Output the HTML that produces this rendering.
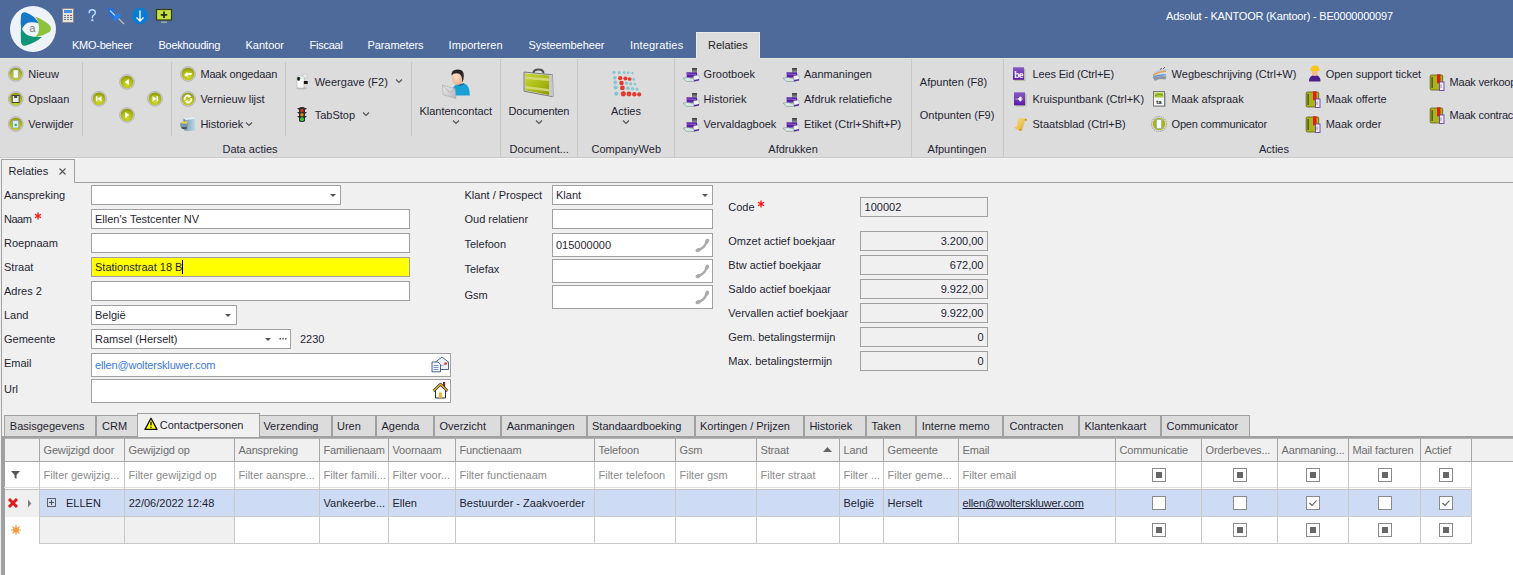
<!DOCTYPE html>
<html><head><meta charset="utf-8"><style>
html,body{margin:0;padding:0;width:1513px;height:575px;overflow:hidden;background:#f0f0f0}
.t{position:absolute;font:11px/13px "Liberation Sans",sans-serif;white-space:nowrap;color:#222}
.r{position:absolute;display:block}
</style></head><body>
<div class="r" style="left:0px;top:0px;width:1513px;height:58px;background:#4d6a9a;"></div>
<svg class="r" style="left:0px;top:0px" width="70" height="57" viewBox="0 0 70 57">
<circle cx="33" cy="29" r="23" fill="#eef2f9"/>
<path d="M21.5,30.5 Q20,22 21,15.5 Q22,11.5 26,12.5 Q34,15 39,23.5 Q33.5,21.5 28.5,22.5 Q24,24 21.5,30.5 Z" fill="#1679c8"/>
<path d="M35,16.5 Q44,20 49.5,25 Q52.5,28.5 49.5,32 Q43,36 35,37.5 Q39.5,33 39,27 Q38.5,20.5 35,16.5 Z" fill="#8dc33c"/>
<path d="M21,26.5 Q23.5,33.5 28.5,35.5 Q34,37.5 42,37 Q35,43 26,45.5 Q21.5,46.5 21,42 Q20.5,34 21,26.5 Z" fill="#109579"/>
<text x="32.3" y="32.3" font-family="Liberation Sans" font-size="10.5" fill="#777" text-anchor="middle">a</text>
</svg>
<svg class="r" style="left:61px;top:7px" width="14" height="17" viewBox="0 0 14 17">
<rect x="1.5" y="1.5" width="11" height="14" fill="#e4e4e4" stroke="#8a8a8a"/>
<rect x="3" y="3" width="8" height="3" fill="#4f8fe0"/>
<g fill="#777"><rect x="3" y="8" width="2" height="1"/><rect x="6" y="8" width="2" height="1"/>
<rect x="3" y="10" width="2" height="1"/><rect x="6" y="10" width="2" height="1"/><rect x="9" y="10" width="2" height="1"/>
<rect x="3" y="12" width="2" height="1"/><rect x="6" y="12" width="2" height="1"/><rect x="9" y="12" width="2" height="1"/></g>
<rect x="9" y="8" width="2" height="1" fill="#e03030"/>
</svg>
<svg class="r" style="left:86px;top:8px" width="12" height="15" viewBox="0 0 12 15"><path d="M3.2,4.8 Q3.2,1.8 6.2,1.8 Q9.3,1.8 9.3,4.6 Q9.3,6.4 7.4,7.3 Q6.3,7.9 6.3,9.8" stroke="#3a6ab8" stroke-width="2.6" fill="none" stroke-linecap="round"/><path d="M3.2,4.8 Q3.2,1.8 6.2,1.8 Q9.3,1.8 9.3,4.6 Q9.3,6.4 7.4,7.3 Q6.3,7.9 6.3,9.8" stroke="#c6def8" stroke-width="1.4" fill="none" stroke-linecap="round"/><circle cx="6.3" cy="12.2" r="1.4" fill="#c6def8" stroke="#3a6ab8" stroke-width="0.6"/></svg>
<svg class="r" style="left:107px;top:7px" width="18" height="18" viewBox="0 0 18 18">
<line x1="11" y1="11" x2="17" y2="17" stroke="#c0c0c0" stroke-width="1.2"/>
<path d="M3.5,6 L8.5,11" stroke="#1f6fd8" stroke-width="4.2"/>
<ellipse cx="4" cy="4" rx="3.6" ry="2.8" transform="rotate(45 4 4)" fill="#1f6fdc"/>
<ellipse cx="10" cy="10" rx="4.6" ry="2.4" transform="rotate(-45 10 10)" fill="#2a7ee8"/>
<path d="M3,3.5 L8,8.5" stroke="#a8d8ff" stroke-width="1.3"/>
</svg>
<svg class="r" style="left:131px;top:7px" width="18" height="18" viewBox="0 0 18 18">
<circle cx="9" cy="9" r="8.2" fill="#0a7bd2"/>
<path d="M9,3.5 V14 M5.5,10.5 L9,14 L12.5,10.5" stroke="#fff" stroke-width="1.3" fill="none"/>
</svg>
<svg class="r" style="left:155px;top:8px" width="18" height="16" viewBox="0 0 18 16">
<rect x="1.5" y="1.5" width="15" height="10.5" fill="#c4e43c" stroke="#3a3a1a" stroke-width="1.2"/>
<path d="M9,3.5 V10 M5.8,6.8 H12.2" stroke="#2a2a10" stroke-width="1.8"/>
<rect x="6" y="13.5" width="6" height="1.5" fill="#9aa"/>
</svg>
<div class="t" style="left:1166px;top:10.00px;color:#fff;letter-spacing:-0.2px;">Adsolut - KANTOOR (Kantoor) - BE0000000097</div>
<div class="t" style="left:72px;top:39.20px;color:#fff;letter-spacing:-0.25px;">KMO-beheer</div>
<div class="t" style="left:158.5px;top:39.20px;color:#fff;letter-spacing:-0.24px;">Boekhouding</div>
<div class="t" style="left:245.5px;top:39.20px;color:#fff;letter-spacing:0px;">Kantoor</div>
<div class="t" style="left:309.5px;top:39.20px;color:#fff;letter-spacing:-0.25px;">Fiscaal</div>
<div class="t" style="left:367.5px;top:39.20px;color:#fff;letter-spacing:-0.09px;">Parameters</div>
<div class="t" style="left:448.5px;top:39.20px;color:#fff;letter-spacing:0.1px;">Importeren</div>
<div class="t" style="left:528.5px;top:39.20px;color:#fff;letter-spacing:-0.1px;">Systeembeheer</div>
<div class="t" style="left:630px;top:39.20px;color:#fff;letter-spacing:0.18px;">Integraties</div>
<div class="r" style="left:696px;top:32px;width:64px;height:27px;background:#dcdcdc;border:1px solid #ebebe8;box-sizing:border-box;border-bottom:none;"></div>
<div class="t" style="left:708px;top:39.20px;color:#222;">Relaties</div>
<div class="r" style="left:0px;top:58px;width:1513px;height:99px;background:#dcdcdc;"></div>
<div class="r" style="left:0px;top:58px;width:696px;height:1px;background:#e6e6e2;"></div>
<div class="r" style="left:760px;top:58px;width:753px;height:1px;background:#e6e6e2;"></div>
<svg class="r" style="left:6px;top:65px" width="18" height="18" viewBox="0 0 18 18">
<defs><radialGradient id="og6_65" cx="0.5" cy="0.72" r="0.8"><stop offset="0" stop-color="#d4dc30"/><stop offset="0.6" stop-color="#aab414"/><stop offset="1" stop-color="#7a8600"/></radialGradient></defs>
<circle cx="9.7" cy="9" r="7.4" fill="#d0d0d0" stroke="#a8a8a8" stroke-width="0.7"/>
<circle cx="9.7" cy="9" r="6.3" fill="url(#og6_65)"/>
<g transform="translate(9.7,9)"><rect x="-2.5" y="-4" width="5" height="8" fill="#f4f8ff" stroke="#9ab" stroke-width="0.6"/></g></svg>
<div class="t" style="left:28.3px;top:68.40px;color:#1f1f33;">Nieuw</div>
<svg class="r" style="left:6px;top:90px" width="18" height="18" viewBox="0 0 18 18">
<defs><radialGradient id="og6_90" cx="0.5" cy="0.72" r="0.8"><stop offset="0" stop-color="#d4dc30"/><stop offset="0.6" stop-color="#aab414"/><stop offset="1" stop-color="#7a8600"/></radialGradient></defs>
<circle cx="9.7" cy="9" r="7.4" fill="#d0d0d0" stroke="#a8a8a8" stroke-width="0.7"/>
<circle cx="9.7" cy="9" r="6.3" fill="url(#og6_90)"/>
<g transform="translate(9.7,9)"><rect x="-3.5" y="-3.5" width="7" height="7" fill="#eee" stroke="#444" stroke-width="1"/><rect x="-1.5" y="-3.5" width="3" height="2.5" fill="#444"/></g></svg>
<div class="t" style="left:28.3px;top:93.40px;color:#1f1f33;">Opslaan</div>
<svg class="r" style="left:6px;top:115px" width="18" height="18" viewBox="0 0 18 18">
<defs><radialGradient id="og6_115" cx="0.5" cy="0.72" r="0.8"><stop offset="0" stop-color="#d4dc30"/><stop offset="0.6" stop-color="#aab414"/><stop offset="1" stop-color="#7a8600"/></radialGradient></defs>
<circle cx="9.7" cy="9" r="7.4" fill="#d0d0d0" stroke="#a8a8a8" stroke-width="0.7"/>
<circle cx="9.7" cy="9" r="6.3" fill="url(#og6_115)"/>
<g transform="translate(9.7,9)"><rect x="-3" y="-3.5" width="6" height="7.5" fill="#cfe8ff" stroke="#89a" stroke-width="0.6"/><path d="M-1,0 h2 v2 h-2z" fill="#3a3"/></g></svg>
<div class="t" style="left:28.3px;top:118.40px;color:#1f1f33;">Verwijder</div>
<div class="r" style="left:82px;top:62px;width:1px;height:74px;background:#c4c4c4;"></div>
<svg class="r" style="left:90px;top:89px" width="18" height="18" viewBox="0 0 18 18">
<defs><radialGradient id="og90_89" cx="0.5" cy="0.72" r="0.8"><stop offset="0" stop-color="#d4dc30"/><stop offset="0.6" stop-color="#aab414"/><stop offset="1" stop-color="#7a8600"/></radialGradient></defs>
<circle cx="9" cy="9.700000000000003" r="7.4" fill="#d0d0d0" stroke="#a8a8a8" stroke-width="0.7"/>
<circle cx="9" cy="9.700000000000003" r="6.3" fill="url(#og90_89)"/>
<g transform="translate(9,9.700000000000003)"><path d="M-2.3,-2.5 V2.5" stroke="#fff" stroke-width="1.6"/><path d="M2.5,-2.8 L-1.5,0 L2.5,2.8 Z" fill="#fff"/></g></svg>
<svg class="r" style="left:118px;top:73px" width="18" height="18" viewBox="0 0 18 18">
<defs><radialGradient id="og118_73" cx="0.5" cy="0.72" r="0.8"><stop offset="0" stop-color="#d4dc30"/><stop offset="0.6" stop-color="#aab414"/><stop offset="1" stop-color="#7a8600"/></radialGradient></defs>
<circle cx="9" cy="9" r="7.4" fill="#d0d0d0" stroke="#a8a8a8" stroke-width="0.7"/>
<circle cx="9" cy="9" r="6.3" fill="url(#og118_73)"/>
<g transform="translate(9,9)"><path d="M1.8,-3 L-2.2,0 L1.8,3 Z" fill="#fff"/></g></svg>
<svg class="r" style="left:118px;top:106px" width="18" height="18" viewBox="0 0 18 18">
<defs><radialGradient id="og118_106" cx="0.5" cy="0.72" r="0.8"><stop offset="0" stop-color="#d4dc30"/><stop offset="0.6" stop-color="#aab414"/><stop offset="1" stop-color="#7a8600"/></radialGradient></defs>
<circle cx="9" cy="9" r="7.4" fill="#d0d0d0" stroke="#a8a8a8" stroke-width="0.7"/>
<circle cx="9" cy="9" r="6.3" fill="url(#og118_106)"/>
<g transform="translate(9,9)"><path d="M-1.8,-3 L2.2,0 L-1.8,3 Z" fill="#fff"/></g></svg>
<svg class="r" style="left:146px;top:89px" width="18" height="18" viewBox="0 0 18 18">
<defs><radialGradient id="og146_89" cx="0.5" cy="0.72" r="0.8"><stop offset="0" stop-color="#d4dc30"/><stop offset="0.6" stop-color="#aab414"/><stop offset="1" stop-color="#7a8600"/></radialGradient></defs>
<circle cx="9" cy="9.700000000000003" r="7.4" fill="#d0d0d0" stroke="#a8a8a8" stroke-width="0.7"/>
<circle cx="9" cy="9.700000000000003" r="6.3" fill="url(#og146_89)"/>
<g transform="translate(9,9.700000000000003)"><path d="M2.3,-2.5 V2.5" stroke="#fff" stroke-width="1.6"/><path d="M-2.5,-2.8 L1.5,0 L-2.5,2.8 Z" fill="#fff"/></g></svg>
<div class="r" style="left:171px;top:62px;width:1px;height:74px;background:#c4c4c4;"></div>
<svg class="r" style="left:179px;top:65px" width="18" height="18" viewBox="0 0 18 18">
<defs><radialGradient id="og179_65" cx="0.5" cy="0.72" r="0.8"><stop offset="0" stop-color="#d4dc30"/><stop offset="0.6" stop-color="#aab414"/><stop offset="1" stop-color="#7a8600"/></radialGradient></defs>
<circle cx="9" cy="9" r="7.4" fill="#d0d0d0" stroke="#a8a8a8" stroke-width="0.7"/>
<circle cx="9" cy="9" r="6.3" fill="url(#og179_65)"/>
<g transform="translate(9,9)"><path d="M-4,1.2 L-0.8,-2.2 L-0.6,-0.6 Q2.5,-2 4.2,-0.2 L3,1.2 Q1.2,0.2 -0.5,1.2 L-0.3,2.8 Z" fill="#fff"/></g></svg>
<div class="t" style="left:200.4px;top:68.40px;color:#1f1f33;letter-spacing:-0.17px;">Maak ongedaan</div>
<svg class="r" style="left:179px;top:90px" width="18" height="18" viewBox="0 0 18 18">
<defs><radialGradient id="og179_90" cx="0.5" cy="0.72" r="0.8"><stop offset="0" stop-color="#d4dc30"/><stop offset="0.6" stop-color="#aab414"/><stop offset="1" stop-color="#7a8600"/></radialGradient></defs>
<circle cx="9" cy="9" r="7.4" fill="#d0d0d0" stroke="#a8a8a8" stroke-width="0.7"/>
<circle cx="9" cy="9" r="6.3" fill="url(#og179_90)"/>
<g transform="translate(9,9)"><path d="M-3.2,1 A3.3,3.3 0 0 1 1.5,-3" stroke="#fff" stroke-width="1.9" fill="none"/><path d="M0.5,-4.8 L3.2,-2.6 L0.3,-1 Z" fill="#fff"/><path d="M3.2,-1 A3.3,3.3 0 0 1 -1.5,3" stroke="#fff" stroke-width="1.9" fill="none"/><path d="M-0.5,4.8 L-3.2,2.6 L-0.3,1 Z" fill="#fff"/></g></svg>
<div class="t" style="left:200.4px;top:93.40px;color:#1f1f33;">Vernieuw lijst</div>
<svg class="r" style="left:176px;top:112px" width="24" height="24" viewBox="0 0 24 24">
<defs><linearGradient id="cabg" x1="0" y1="0" x2="1" y2="0"><stop offset="0" stop-color="#7fa4b6"/><stop offset="1" stop-color="#b8d8e4"/></linearGradient></defs>
<path d="M7.5,6.5 L17,5.5 L19,7 L9.5,8 Z" fill="#e2f0f6"/>
<path d="M9.5,8 L19,7 L19,18.5 L9.5,19 Z" fill="url(#cabg)"/>
<path d="M7.5,6.5 L9.5,8 L9.5,19 L7.5,17.5 Z" fill="#6a8898"/>
<path d="M4,10 L11.5,10 L12,15 L4.5,15 Z" fill="#7a98a8"/>
<path d="M4,10 L11.5,10 L11.5,11 L4,11 Z" fill="#c8dce4"/>
<rect x="6" y="9.5" width="5" height="2" fill="#f0d040"/>
<path d="M5,15 L11,15 L11,17 L6,17 Z" fill="#4a5a64"/>
</svg>
<div class="t" style="left:200.4px;top:118.40px;color:#1f1f33;">Historiek</div>
<svg class="r" style="left:245px;top:121px" width="8" height="6" viewBox="0 0 8 6"><path d="M1,1.5 L4,4.5 L7,1.5" stroke="#555" stroke-width="1.2" fill="none"/></svg>
<div class="r" style="left:285px;top:62px;width:1px;height:74px;background:#c4c4c4;"></div>
<svg class="r" style="left:292px;top:70px" width="20" height="22" viewBox="0 0 20 22">
<ellipse cx="9.5" cy="18.3" rx="5.5" ry="1.2" fill="#bcbcbc"/>
<rect x="11" y="3.8" width="4.2" height="4.5" rx="1.2" fill="#eaeaea" stroke="#b8b8b8" stroke-width="0.5"/>
<rect x="5" y="6" width="7" height="12" rx="1.2" fill="#fafafa" stroke="#b4b4b4" stroke-width="0.6"/>
<ellipse cx="6.6" cy="8.8" rx="1.5" ry="2" fill="#141414"/>
<path d="M7.6,7.5 Q8.3,8.8 7.6,10.2" stroke="#2a9a2a" stroke-width="0.6" fill="none"/>
<rect x="11.5" y="10.6" width="4.6" height="3.7" fill="#111" stroke="#f4f4f4" stroke-width="0.7"/>
</svg>
<div class="t" style="left:314.7px;top:76.10px;color:#1f1f33;">Weergave (F2)</div>
<svg class="r" style="left:395px;top:78px" width="8" height="6" viewBox="0 0 8 6"><path d="M1,1.5 L4,4.5 L7,1.5" stroke="#555" stroke-width="1.2" fill="none"/></svg>
<svg class="r" style="left:295px;top:105px" width="14" height="19" viewBox="0 0 14 19">
<path d="M2,3 L12,3 L10,5 L10,7 L12,7 L10,9 L10,11 L12,11 L10,13 L10,16 L4,16 L4,13 L2,11 L4,11 L4,9 L2,7 L4,7 L4,5 Z" fill="#333"/>
<rect x="4" y="2" width="6" height="15" rx="2" fill="#2e2e2e"/>
<circle cx="7" cy="5.5" r="1.7" fill="#d8301c"/><circle cx="7" cy="9.8" r="1.7" fill="#e08a10"/><circle cx="7" cy="14.3" r="2" fill="#30d030"/>
</svg>
<div class="t" style="left:314.7px;top:109.10px;color:#1f1f33;">TabStop</div>
<svg class="r" style="left:362px;top:111px" width="8" height="6" viewBox="0 0 8 6"><path d="M1,1.5 L4,4.5 L7,1.5" stroke="#555" stroke-width="1.2" fill="none"/></svg>
<div class="r" style="left:411px;top:62px;width:1px;height:74px;background:#c4c4c4;"></div>
<svg class="r" style="left:435px;top:62px" width="40" height="40" viewBox="0 0 40 40">
<defs><linearGradient id="envg" x1="0" y1="0" x2="1" y2="1"><stop offset="0" stop-color="#f0f0f0"/><stop offset="1" stop-color="#b0b4b8"/></linearGradient>
<radialGradient id="faceg" cx="0.4" cy="0.4" r="0.7"><stop offset="0" stop-color="#fde0cc"/><stop offset="1" stop-color="#e8a880"/></radialGradient></defs>
<path d="M16,33.5 Q16,24.5 23,21.5 L29.5,21.5 Q34.8,23.5 34.8,33.5 Z" fill="#1ba0d6"/>
<path d="M21,21.5 Q25,25 29,21.5" stroke="#1a5070" stroke-width="1" fill="none"/>
<ellipse cx="22.4" cy="15.8" rx="5.6" ry="7.3" fill="url(#faceg)"/>
<path d="M16.5,13.5 Q16,7.5 22.5,7.5 Q28.8,7 28.8,13.5 Q28.8,18 27.2,20.5 Q27.5,12.5 23.5,11.5 Q18.5,10.8 16.5,13.5 Z" fill="#262626"/>
<path d="M7.5,23 L20,26.8 L21,36.5 L8.2,32.8 Z" fill="url(#envg)" stroke="#a8a8a8" stroke-width="0.6"/>
<path d="M7.8,23.5 L15,30.5 L20.2,27.2" stroke="#9a9a9a" stroke-width="0.6" fill="none"/>
</svg>
<div class="t" style="left:419.4px;top:105.10px;color:#1f1f33;">Klantencontact</div>
<svg class="r" style="left:452px;top:119px" width="8" height="6" viewBox="0 0 8 6"><path d="M1,1.5 L4,4.5 L7,1.5" stroke="#555" stroke-width="1.2" fill="none"/></svg>
<div class="t" style="left:222.5px;top:143.10px;color:#1f1f33;">Data acties</div>
<div class="r" style="left:500px;top:59px;width:1px;height:98px;background:#c8c8c8;"></div>
<svg class="r" style="left:518px;top:62px" width="40" height="40" viewBox="0 0 40 40">
<defs><linearGradient id="bcg" x1="0" y1="0" x2="1" y2="1"><stop offset="0" stop-color="#c8d630"/><stop offset="0.6" stop-color="#a8b812"/><stop offset="1" stop-color="#8a9808"/></linearGradient></defs>
<path d="M15.5,11 Q15.5,7.5 20.5,7.5 Q25.5,7.5 25.5,11.5" stroke="#505050" stroke-width="2" fill="none"/>
<path d="M6,10 L34.5,12.8 L35,34.7 L6,29.2 Z" fill="#d8d8d8" stroke="#606060" stroke-width="0.8"/>
<path d="M7.2,11.5 L31,13.5 L31,33 L7.2,28.2 Z" fill="url(#bcg)"/>
<path d="M31,13.5 L34.5,12.8 L35,34.7 L31,33 Z" fill="#c8c8c8"/>
<path d="M7.2,14.5 L31,16.5 L31,19 L7.2,17 Z" fill="#d8e088" opacity="0.8"/>
<path d="M7.2,24 L31,27 L31,29.5 L7.2,26.5 Z" fill="#d8e088" opacity="0.8"/>
</svg>
<div class="t" style="left:508.6px;top:105.10px;color:#1f1f33;letter-spacing:-0.17px;">Documenten</div>
<svg class="r" style="left:535px;top:119px" width="8" height="6" viewBox="0 0 8 6"><path d="M1,1.5 L4,4.5 L7,1.5" stroke="#555" stroke-width="1.2" fill="none"/></svg>
<div class="t" style="left:509.6px;top:143.10px;color:#1f1f33;">Document...</div>
<div class="r" style="left:577px;top:59px;width:1px;height:98px;background:#c8c8c8;"></div>
<svg class="r" style="left:605px;top:65px" width="40" height="35" viewBox="0 0 40 35"><circle cx="9.0" cy="7.3" r="1.60" fill="#86c6d2"/><circle cx="14.3" cy="7.5" r="1.50" fill="#86c6d2"/><circle cx="19.2" cy="7.7" r="1.41" fill="#86c6d2"/><circle cx="23.2" cy="7.9" r="1.31" fill="#86c6d2"/><circle cx="27.4" cy="8.1" r="1.22" fill="#86c6d2"/><circle cx="9.8" cy="12.8" r="1.75" fill="#86c6d2"/><circle cx="15.2" cy="13.2" r="2.11" fill="#e8392c"/><circle cx="20.4" cy="13.6" r="1.98" fill="#e8392c"/><circle cx="24.7" cy="14.0" r="1.85" fill="#e8392c"/><circle cx="28.7" cy="14.4" r="1.33" fill="#86c6d2"/><circle cx="10.2" cy="17.5" r="1.90" fill="#86c6d2"/><circle cx="16.5" cy="17.9" r="2.26" fill="#e8392c"/><circle cx="21.5" cy="18.3" r="1.67" fill="#86c6d2"/><circle cx="25.8" cy="18.7" r="1.56" fill="#86c6d2"/><circle cx="30.0" cy="19.1" r="1.44" fill="#86c6d2"/><circle cx="10.6" cy="22.5" r="2.05" fill="#86c6d2"/><circle cx="17.4" cy="22.9" r="2.40" fill="#e8392c"/><circle cx="23.0" cy="23.3" r="1.80" fill="#86c6d2"/><circle cx="27.5" cy="23.7" r="1.68" fill="#86c6d2"/><circle cx="32.0" cy="24.1" r="1.56" fill="#86c6d2"/><circle cx="11.3" cy="28.6" r="2.20" fill="#86c6d2"/><circle cx="18.3" cy="28.8" r="2.54" fill="#e8392c"/><circle cx="24.0" cy="29.0" r="2.38" fill="#e8392c"/><circle cx="29.3" cy="29.2" r="2.21" fill="#e8392c"/><circle cx="34.2" cy="29.4" r="2.05" fill="#e8392c"/></svg>
<div class="t" style="left:611px;top:105.10px;color:#1f1f33;">Acties</div>
<svg class="r" style="left:622px;top:119px" width="8" height="6" viewBox="0 0 8 6"><path d="M1,1.5 L4,4.5 L7,1.5" stroke="#555" stroke-width="1.2" fill="none"/></svg>
<div class="t" style="left:591.5px;top:143.10px;color:#1f1f33;">CompanyWeb</div>
<div class="r" style="left:674px;top:59px;width:1px;height:98px;background:#c8c8c8;"></div>
<svg class="r" style="left:680px;top:64px" width="20" height="20" viewBox="0 0 20 20">
<defs><linearGradient id="ppg" x1="0" y1="0" x2="0" y2="1"><stop offset="0" stop-color="#3a3a3a"/><stop offset="1" stop-color="#b8b8b8"/></linearGradient></defs>
<rect x="12" y="4" width="5" height="6" fill="url(#ppg)"/>
<path d="M6.5,8.2 L17,8.6 L17.5,13.6 L6.8,13.8 Z" fill="#5a1fa6"/>
<path d="M7,10 L16,10.5" stroke="#9a78d0" stroke-width="0.8"/>
<path d="M13.5,12 L19,11 L19,16.5 L14,17.5 Z" fill="#eef2f2" stroke="#8a9a9a" stroke-width="0.4"/>
<path d="M14,16 L19,15 L19,16.6 L14,17.5 Z" fill="#5a1fa6"/>
<path d="M3,14.2 L8,13.4 L14,15 L14,17.3 L6.5,17.4 Z" fill="#d6eaea" stroke="#6a7a7a" stroke-width="0.5"/>
</svg>
<div class="t" style="left:703.6px;top:68.40px;color:#1f1f33;">Grootboek</div>
<svg class="r" style="left:780px;top:64px" width="20" height="20" viewBox="0 0 20 20">
<defs><linearGradient id="ppg" x1="0" y1="0" x2="0" y2="1"><stop offset="0" stop-color="#3a3a3a"/><stop offset="1" stop-color="#b8b8b8"/></linearGradient></defs>
<rect x="12" y="4" width="5" height="6" fill="url(#ppg)"/>
<path d="M6.5,8.2 L17,8.6 L17.5,13.6 L6.8,13.8 Z" fill="#5a1fa6"/>
<path d="M7,10 L16,10.5" stroke="#9a78d0" stroke-width="0.8"/>
<path d="M13.5,12 L19,11 L19,16.5 L14,17.5 Z" fill="#eef2f2" stroke="#8a9a9a" stroke-width="0.4"/>
<path d="M14,16 L19,15 L19,16.6 L14,17.5 Z" fill="#5a1fa6"/>
<path d="M3,14.2 L8,13.4 L14,15 L14,17.3 L6.5,17.4 Z" fill="#d6eaea" stroke="#6a7a7a" stroke-width="0.5"/>
</svg>
<div class="t" style="left:804px;top:68.40px;color:#1f1f33;">Aanmaningen</div>
<svg class="r" style="left:680px;top:89px" width="20" height="20" viewBox="0 0 20 20">
<defs><linearGradient id="ppg" x1="0" y1="0" x2="0" y2="1"><stop offset="0" stop-color="#3a3a3a"/><stop offset="1" stop-color="#b8b8b8"/></linearGradient></defs>
<rect x="12" y="4" width="5" height="6" fill="url(#ppg)"/>
<path d="M6.5,8.2 L17,8.6 L17.5,13.6 L6.8,13.8 Z" fill="#5a1fa6"/>
<path d="M7,10 L16,10.5" stroke="#9a78d0" stroke-width="0.8"/>
<path d="M13.5,12 L19,11 L19,16.5 L14,17.5 Z" fill="#eef2f2" stroke="#8a9a9a" stroke-width="0.4"/>
<path d="M14,16 L19,15 L19,16.6 L14,17.5 Z" fill="#5a1fa6"/>
<path d="M3,14.2 L8,13.4 L14,15 L14,17.3 L6.5,17.4 Z" fill="#d6eaea" stroke="#6a7a7a" stroke-width="0.5"/>
</svg>
<div class="t" style="left:703.6px;top:93.40px;color:#1f1f33;">Historiek</div>
<svg class="r" style="left:780px;top:89px" width="20" height="20" viewBox="0 0 20 20">
<defs><linearGradient id="ppg" x1="0" y1="0" x2="0" y2="1"><stop offset="0" stop-color="#3a3a3a"/><stop offset="1" stop-color="#b8b8b8"/></linearGradient></defs>
<rect x="12" y="4" width="5" height="6" fill="url(#ppg)"/>
<path d="M6.5,8.2 L17,8.6 L17.5,13.6 L6.8,13.8 Z" fill="#5a1fa6"/>
<path d="M7,10 L16,10.5" stroke="#9a78d0" stroke-width="0.8"/>
<path d="M13.5,12 L19,11 L19,16.5 L14,17.5 Z" fill="#eef2f2" stroke="#8a9a9a" stroke-width="0.4"/>
<path d="M14,16 L19,15 L19,16.6 L14,17.5 Z" fill="#5a1fa6"/>
<path d="M3,14.2 L8,13.4 L14,15 L14,17.3 L6.5,17.4 Z" fill="#d6eaea" stroke="#6a7a7a" stroke-width="0.5"/>
</svg>
<div class="t" style="left:804px;top:93.40px;color:#1f1f33;">Afdruk relatiefiche</div>
<svg class="r" style="left:680px;top:114px" width="20" height="20" viewBox="0 0 20 20">
<defs><linearGradient id="ppg" x1="0" y1="0" x2="0" y2="1"><stop offset="0" stop-color="#3a3a3a"/><stop offset="1" stop-color="#b8b8b8"/></linearGradient></defs>
<rect x="12" y="4" width="5" height="6" fill="url(#ppg)"/>
<path d="M6.5,8.2 L17,8.6 L17.5,13.6 L6.8,13.8 Z" fill="#5a1fa6"/>
<path d="M7,10 L16,10.5" stroke="#9a78d0" stroke-width="0.8"/>
<path d="M13.5,12 L19,11 L19,16.5 L14,17.5 Z" fill="#eef2f2" stroke="#8a9a9a" stroke-width="0.4"/>
<path d="M14,16 L19,15 L19,16.6 L14,17.5 Z" fill="#5a1fa6"/>
<path d="M3,14.2 L8,13.4 L14,15 L14,17.3 L6.5,17.4 Z" fill="#d6eaea" stroke="#6a7a7a" stroke-width="0.5"/>
</svg>
<div class="t" style="left:703.6px;top:118.40px;color:#1f1f33;">Vervaldagboek</div>
<svg class="r" style="left:780px;top:114px" width="20" height="20" viewBox="0 0 20 20">
<defs><linearGradient id="ppg" x1="0" y1="0" x2="0" y2="1"><stop offset="0" stop-color="#3a3a3a"/><stop offset="1" stop-color="#b8b8b8"/></linearGradient></defs>
<rect x="12" y="4" width="5" height="6" fill="url(#ppg)"/>
<path d="M6.5,8.2 L17,8.6 L17.5,13.6 L6.8,13.8 Z" fill="#5a1fa6"/>
<path d="M7,10 L16,10.5" stroke="#9a78d0" stroke-width="0.8"/>
<path d="M13.5,12 L19,11 L19,16.5 L14,17.5 Z" fill="#eef2f2" stroke="#8a9a9a" stroke-width="0.4"/>
<path d="M14,16 L19,15 L19,16.6 L14,17.5 Z" fill="#5a1fa6"/>
<path d="M3,14.2 L8,13.4 L14,15 L14,17.3 L6.5,17.4 Z" fill="#d6eaea" stroke="#6a7a7a" stroke-width="0.5"/>
</svg>
<div class="t" style="left:804px;top:118.40px;color:#1f1f33;">Etiket (Ctrl+Shift+P)</div>
<div class="t" style="left:768.3px;top:143.10px;color:#1f1f33;">Afdrukken</div>
<div class="r" style="left:911px;top:59px;width:1px;height:98px;background:#c8c8c8;"></div>
<div class="t" style="left:919.8px;top:76.10px;color:#1f1f33;">Afpunten (F8)</div>
<div class="t" style="left:919.8px;top:109.10px;color:#1f1f33;">Ontpunten (F9)</div>
<div class="t" style="left:927.6px;top:143.10px;color:#1f1f33;">Afpuntingen</div>
<div class="r" style="left:1003px;top:59px;width:1px;height:98px;background:#c8c8c8;"></div>
<svg class="r" style="left:1012px;top:66px" width="15" height="16" viewBox="0 0 15 16">
<defs><linearGradient id="eidg" x1="0" y1="0" x2="0" y2="1"><stop offset="0" stop-color="#8a5ac8"/><stop offset="1" stop-color="#5a1aa8"/></linearGradient></defs>
<path d="M1.5,1.5 L11.8,2 L13.5,3.5 L13.5,15 L3,15 L1.5,13.5 Z" fill="#b8bca8"/>
<rect x="1" y="1.3" width="11" height="12.5" fill="url(#eidg)"/>
<text x="6.6" y="11.6" font-family="Liberation Sans" font-size="8.5" font-weight="bold" fill="#fff" text-anchor="middle" letter-spacing="-0.6">be</text>
</svg>
<div class="t" style="left:1032.5px;top:68.40px;color:#1f1f33;letter-spacing:-0.15px;">Lees Eid (Ctrl+E)</div>
<svg class="r" style="left:1013px;top:91px" width="15" height="16" viewBox="0 0 15 16">
<path d="M1.5,1.5 L11.8,2 L13.5,3.5 L13.5,15.5 L3,15.5 L1.5,14 Z" fill="#b8bca8"/>
<rect x="1" y="1.3" width="11" height="13" fill="url(#eidg)"/>
<path d="M2.5,8 H10" stroke="#d8c8f0" stroke-width="0.8"/>
<path d="M5,8 L7,5.5 L8.5,6 L8.5,10 L7,10.5 Z" fill="#fff"/>
</svg>
<div class="t" style="left:1032.5px;top:93.40px;color:#1f1f33;">Kruispuntbank (Ctrl+K)</div>
<svg class="r" style="left:1008px;top:112px" width="24" height="24" viewBox="0 0 24 24">
<defs><linearGradient id="scg" x1="0" y1="0" x2="1" y2="1"><stop offset="0" stop-color="#f8e08a"/><stop offset="1" stop-color="#e0a830"/></linearGradient></defs>
<path d="M10.5,6.2 Q14.5,5.5 18.8,7.2 Q18.5,9 16.8,9 Q15.8,13 14.5,17.5 Q14,19 12.5,18.8 Q9,18 6,15.5 Q6.5,14.5 8.5,14.8 Q9.5,10 10.5,6.2 Z" fill="url(#scg)"/>
<circle cx="17.8" cy="7.8" r="1.1" fill="#c89020"/><circle cx="12.3" cy="17.8" r="1" fill="#c89020"/>
</svg>
<div class="t" style="left:1032.5px;top:118.40px;color:#1f1f33;">Staatsblad (Ctrl+B)</div>
<svg class="r" style="left:1148px;top:62px" width="24" height="24" viewBox="0 0 24 24">
<path d="M4.5,12.5 Q9,6.5 18.5,7 L18,10 Q11,10 6,14.5 Z" fill="#c0c8d0"/>
<path d="M5,13.5 Q10,9.5 18,9.5" stroke="#f09a30" stroke-width="1.2" fill="none"/>
<path d="M5,15.5 Q10,12.5 18,13" stroke="#4a8ad8" stroke-width="1.2" fill="none"/>
<path d="M5,16 Q11,13 18.5,14.5 L17.5,17.5 Q11,16 7,19 Z" fill="#8c969e"/>
<path d="M15,7 L17,5 M12,7.5 L14,6" stroke="#444" stroke-width="0.8"/>
</svg>
<div class="t" style="left:1171.6px;top:68.40px;color:#1f1f33;">Wegbeschrijving (Ctrl+W)</div>
<svg class="r" style="left:1150px;top:88px" width="18" height="20" viewBox="0 0 18 20">
<rect x="5" y="5" width="11" height="14" fill="#b8b8b8"/>
<rect x="3.5" y="3.5" width="11" height="14.5" fill="#f6f6f6" stroke="#707070" stroke-width="0.9"/>
<rect x="4.5" y="4.5" width="9" height="5" fill="#a8c838"/>
<path d="M5,8 Q8,5 13,7" stroke="#6a8a20" stroke-width="0.8" fill="none"/>
<text x="9" y="15.5" font-family="Liberation Sans" font-size="6" font-weight="bold" fill="#222" text-anchor="middle">ta</text>
</svg>
<div class="t" style="left:1171.6px;top:93.40px;color:#1f1f33;">Maak afspraak</div>
<svg class="r" style="left:1150px;top:115px" width="18" height="18" viewBox="0 0 18 18"><circle cx="9" cy="9" r="7.5" fill="none" stroke="#a4a4a4" stroke-width="1.1" stroke-dasharray="1.4 0.9"/><circle cx="9" cy="9" r="6.2" fill="#a8b418"/><rect x="6.5" y="4.5" width="5" height="9" fill="#f4f8ff" stroke="#8a9aaa" stroke-width="0.5"/></svg>
<div class="t" style="left:1171.6px;top:118.40px;color:#1f1f33;letter-spacing:-0.22px;">Open communicator</div>
<svg class="r" style="left:1307px;top:64px" width="15" height="18" viewBox="0 0 15 18">
<path d="M2,17.5 Q2,11 8,11 Q13.5,11 13.5,17.5 Z" fill="#4a1e8c"/>
<ellipse cx="7.8" cy="8.5" rx="3" ry="3.5" fill="#f2b890"/>
<path d="M3.5,6.5 Q3.5,1.5 8,1.5 Q12.5,1.5 12.5,6.5 L13,7 L3,7 Z" fill="#f6c818"/>
</svg>
<div class="t" style="left:1325.7px;top:68.40px;color:#1f1f33;">Open support ticket</div>
<svg class="r" style="left:1305px;top:91px" width="16" height="17" viewBox="0 0 16 17">
<rect x="1.2" y="1" width="12.5" height="15" rx="1.2" fill="#a8b61a" stroke="#5a6010" stroke-width="0.8"/>
<rect x="2.6" y="3" width="1" height="11" fill="#2a2a10"/>
<rect x="8" y="0.3" width="3.5" height="9" fill="#e81818"/>
<rect x="10.5" y="8" width="4.5" height="8.5" fill="#f0eaf8" stroke="#6a40a8" stroke-width="0.9"/>
<path d="M12,10.5 V14" stroke="#8a70b8" stroke-width="0.8"/>
</svg>
<div class="t" style="left:1325.7px;top:93.40px;color:#1f1f33;">Maak offerte</div>
<svg class="r" style="left:1305px;top:116px" width="16" height="17" viewBox="0 0 16 17">
<rect x="1.2" y="1" width="12.5" height="15" rx="1.2" fill="#a8b61a" stroke="#5a6010" stroke-width="0.8"/>
<rect x="2.6" y="3" width="1" height="11" fill="#2a2a10"/>
<rect x="8" y="0.3" width="3.5" height="9" fill="#e81818"/>
<rect x="10.5" y="8" width="4.5" height="8.5" fill="#f0eaf8" stroke="#6a40a8" stroke-width="0.9"/>
<path d="M12,10.5 V14" stroke="#8a70b8" stroke-width="0.8"/>
</svg>
<div class="t" style="left:1325.7px;top:118.40px;color:#1f1f33;">Maak order</div>
<svg class="r" style="left:1429px;top:74px" width="16" height="17" viewBox="0 0 16 17">
<rect x="1.2" y="1" width="12.5" height="15" rx="1.2" fill="#a8b61a" stroke="#5a6010" stroke-width="0.8"/>
<rect x="2.6" y="3" width="1" height="11" fill="#2a2a10"/>
<rect x="8" y="0.3" width="3.5" height="9" fill="#e81818"/>
<rect x="10.5" y="8" width="4.5" height="8.5" fill="#f0eaf8" stroke="#6a40a8" stroke-width="0.9"/>
<path d="M12,10.5 V14" stroke="#8a70b8" stroke-width="0.8"/>
</svg>
<div class="t" style="left:1449.5px;top:76.10px;color:#1f1f33;letter-spacing:-0.2px;">Maak verkoopfactuur</div>
<svg class="r" style="left:1429px;top:107px" width="16" height="17" viewBox="0 0 16 17">
<rect x="1.2" y="1" width="12.5" height="15" rx="1.2" fill="#a8b61a" stroke="#5a6010" stroke-width="0.8"/>
<rect x="2.6" y="3" width="1" height="11" fill="#2a2a10"/>
<rect x="8" y="0.3" width="3.5" height="9" fill="#e81818"/>
<rect x="10.5" y="8" width="4.5" height="8.5" fill="#f0eaf8" stroke="#6a40a8" stroke-width="0.9"/>
<path d="M12,10.5 V14" stroke="#8a70b8" stroke-width="0.8"/>
</svg>
<div class="t" style="left:1449.5px;top:109.10px;color:#1f1f33;letter-spacing:-0.2px;">Maak contract</div>
<div class="t" style="left:1259px;top:143.10px;color:#1f1f33;">Acties</div>
<div class="r" style="left:0px;top:157px;width:1513px;height:418px;background:#f0f0f0;"></div>
<div class="r" style="left:0px;top:157px;width:1513px;height:1px;background:#c9c9c9;"></div>
<div class="r" style="left:0px;top:158px;width:1513px;height:1px;background:#f5f5f5;"></div>
<div class="r" style="left:75px;top:182px;width:1438px;height:1px;background:#a0a0a0;"></div>
<div class="r" style="left:1px;top:159px;width:74px;height:24px;background:#f0f0f0;border:1px solid #a0a0a0;box-sizing:border-box;border-bottom:none;"></div>
<div class="t" style="left:8.5px;top:164.90px;color:#1f1f33;">Relaties</div>
<svg class="r" style="left:58px;top:167px" width="9" height="9" viewBox="0 0 9 9"><path d="M1.5,1.5 L7.5,7.5 M7.5,1.5 L1.5,7.5" stroke="#555" stroke-width="1.1"/></svg>
<div class="r" style="left:1px;top:182px;width:1px;height:393px;background:#a0a0a0;"></div>
<div class="t" style="left:4px;top:189.20px;color:#1f1f33;">Aanspreking</div>
<div class="t" style="left:4px;top:213.00px;color:#1f1f33;letter-spacing:-0.5px;">Naam</div>
<div class="t" style="left:4px;top:237.00px;color:#1f1f33;">Roepnaam</div>
<div class="t" style="left:4px;top:261.00px;color:#1f1f33;">Straat</div>
<div class="t" style="left:4px;top:285.40px;color:#1f1f33;">Adres 2</div>
<div class="t" style="left:4px;top:309.40px;color:#1f1f33;">Land</div>
<div class="t" style="left:4px;top:333.40px;color:#1f1f33;">Gemeente</div>
<div class="t" style="left:4px;top:357.40px;color:#1f1f33;">Email</div>
<div class="t" style="left:4px;top:383.20px;color:#1f1f33;">Url</div>
<svg class="r" style="left:34px;top:211.5px" width="8" height="8" viewBox="0 0 8 8"><path d="M4,0.5 V7.5 M1,2.2 L7,5.8 M7,2.2 L1,5.8" stroke="#ff1010" stroke-width="1.3"/></svg>
<div class="r" style="left:91px;top:185px;width:250px;height:20px;background:#fff;border:1px solid #a0a0a0;box-sizing:border-box;"></div>
<svg class="r" style="left:329px;top:193px" width="8" height="5" viewBox="0 0 8 5"><path d="M1,1 L7,1 L4,4 Z" fill="#555"/></svg>
<div class="r" style="left:91px;top:209px;width:319px;height:20px;background:#fff;border:1px solid #a0a0a0;box-sizing:border-box;"></div>
<div class="t" style="left:95px;top:213.00px;color:#1f1f33;">Ellen's Testcenter NV</div>
<div class="r" style="left:91px;top:233px;width:319px;height:20px;background:#fff;border:1px solid #a0a0a0;box-sizing:border-box;"></div>
<div class="r" style="left:91px;top:257px;width:319px;height:20px;background:#ffff00;border:1px solid #a0a0a0;box-sizing:border-box;"></div>
<div class="t" style="left:95px;top:261.00px;color:#1f1f33;">Stationstraat 18 B</div>
<div class="r" style="left:182px;top:260px;width:1px;height:14px;background:#000;"></div>
<div class="r" style="left:91px;top:281px;width:319px;height:20px;background:#fff;border:1px solid #a0a0a0;box-sizing:border-box;"></div>
<div class="r" style="left:91px;top:305px;width:146px;height:20px;background:#fff;border:1px solid #a0a0a0;box-sizing:border-box;"></div>
<div class="t" style="left:95px;top:309.40px;color:#1f1f33;">België</div>
<svg class="r" style="left:224px;top:313px" width="8" height="5" viewBox="0 0 8 5"><path d="M1,1 L7,1 L4,4 Z" fill="#555"/></svg>
<div class="r" style="left:91px;top:329px;width:200px;height:20px;background:#fff;border:1px solid #a0a0a0;box-sizing:border-box;"></div>
<div class="t" style="left:95px;top:333.40px;color:#1f1f33;">Ramsel (Herselt)</div>
<svg class="r" style="left:264px;top:337px" width="8" height="5" viewBox="0 0 8 5"><path d="M1,1 L7,1 L4,4 Z" fill="#555"/></svg>
<svg class="r" style="left:278px;top:337px" width="10" height="4" viewBox="0 0 10 4"><rect x="1.5" y="1" width="1.5" height="1.5" fill="#555"/><rect x="4.3" y="1" width="1.5" height="1.5" fill="#555"/><rect x="7.1" y="1" width="1.5" height="1.5" fill="#555"/></svg>
<div class="t" style="left:300px;top:333.40px;color:#1f1f33;">2230</div>
<div class="r" style="left:91px;top:353px;width:360px;height:24px;background:#fff;border:1px solid #a0a0a0;box-sizing:border-box;"></div>
<div class="t" style="left:95px;top:359.20px;color:#3d7ad6;letter-spacing:-0.17px;">ellen@wolterskluwer.com</div>
<svg class="r" style="left:426px;top:352px" width="28" height="24" viewBox="0 0 28 24">
<path d="M9.5,10 L16,5 L22.5,10 L22.5,17.5 L9.5,17.5 Z" fill="#eef3fb" stroke="#3a5478" stroke-width="0.9"/>
<path d="M9.5,10 L16,14 L22.5,10" stroke="#7890b0" stroke-width="0.7" fill="none"/>
<rect x="18.5" y="10.5" width="2.2" height="2.2" fill="#e82a10"/>
<path d="M6,10 L12,10 L14.5,12.5 L14.5,19.8 L6,19.8 Z" fill="#f2f6fc" stroke="#3a5478" stroke-width="0.9"/>
<path d="M7.5,13.5 H12.5 M7.5,15.5 H12.5 M7.5,17.5 H12.5" stroke="#5a80c0" stroke-width="0.8"/>
</svg>
<div class="r" style="left:91px;top:379px;width:360px;height:24px;background:#fff;border:1px solid #a0a0a0;box-sizing:border-box;"></div>
<svg class="r" style="left:426px;top:378px" width="28" height="24" viewBox="0 0 28 24">
<rect x="17" y="4" width="2.2" height="5" fill="#8a2a1a"/>
<path d="M9.5,11 V20 H19.5 V11" fill="#fafcff" stroke="#283040" stroke-width="1"/>
<path d="M7.5,13 L14.5,6.2 L21.5,13" stroke="#283040" stroke-width="2.6" fill="none" stroke-linejoin="round"/>
<path d="M7.5,13 L14.5,6.2 L21.5,13" stroke="#f0b020" stroke-width="1.3" fill="none" stroke-linejoin="round"/>
<rect x="13" y="14.5" width="2.8" height="5.5" fill="#f0b020"/>
</svg>
<div class="t" style="left:464.5px;top:188.90px;color:#1f1f33;">Klant / Prospect</div>
<div class="t" style="left:464.5px;top:213.40px;color:#1f1f33;">Oud relatienr</div>
<div class="t" style="left:464.5px;top:237.60px;color:#1f1f33;">Telefoon</div>
<div class="t" style="left:464.5px;top:263.20px;color:#1f1f33;">Telefax</div>
<div class="t" style="left:464.5px;top:289.20px;color:#1f1f33;">Gsm</div>
<div class="r" style="left:552px;top:185px;width:161px;height:20px;background:#fff;border:1px solid #a0a0a0;box-sizing:border-box;"></div>
<div class="t" style="left:556px;top:188.90px;color:#1f1f33;">Klant</div>
<svg class="r" style="left:701px;top:193px" width="8" height="5" viewBox="0 0 8 5"><path d="M1,1 L7,1 L4,4 Z" fill="#555"/></svg>
<div class="r" style="left:552px;top:209px;width:161px;height:20px;background:#fff;border:1px solid #a0a0a0;box-sizing:border-box;"></div>
<div class="r" style="left:552px;top:233px;width:161px;height:24px;background:#fff;border:1px solid #a0a0a0;box-sizing:border-box;"></div>
<div class="t" style="left:556px;top:239.40px;color:#1f1f33;">015000000</div>
<svg class="r" style="left:695px;top:238px" width="15" height="15" viewBox="0 0 15 15"><path d="M3.2,11.6 Q9.2,10.6 11.6,3.8" stroke="#acacac" stroke-width="2.4" fill="none"/><ellipse cx="3.3" cy="12" rx="2.9" ry="1.9" transform="rotate(-25 3.3 12)" fill="#acacac"/><ellipse cx="12" cy="3.3" rx="2.9" ry="1.9" transform="rotate(-65 12 3.3)" fill="#acacac"/></svg>
<div class="r" style="left:552px;top:259px;width:161px;height:24px;background:#fff;border:1px solid #a0a0a0;box-sizing:border-box;"></div>
<svg class="r" style="left:695px;top:264px" width="15" height="15" viewBox="0 0 15 15"><path d="M3.2,11.6 Q9.2,10.6 11.6,3.8" stroke="#acacac" stroke-width="2.4" fill="none"/><ellipse cx="3.3" cy="12" rx="2.9" ry="1.9" transform="rotate(-25 3.3 12)" fill="#acacac"/><ellipse cx="12" cy="3.3" rx="2.9" ry="1.9" transform="rotate(-65 12 3.3)" fill="#acacac"/></svg>
<div class="r" style="left:552px;top:285px;width:161px;height:24px;background:#fff;border:1px solid #a0a0a0;box-sizing:border-box;"></div>
<svg class="r" style="left:695px;top:290px" width="15" height="15" viewBox="0 0 15 15"><path d="M3.2,11.6 Q9.2,10.6 11.6,3.8" stroke="#acacac" stroke-width="2.4" fill="none"/><ellipse cx="3.3" cy="12" rx="2.9" ry="1.9" transform="rotate(-25 3.3 12)" fill="#acacac"/><ellipse cx="12" cy="3.3" rx="2.9" ry="1.9" transform="rotate(-65 12 3.3)" fill="#acacac"/></svg>
<div class="t" style="left:728.3px;top:201.20px;color:#1f1f33;">Code</div>
<svg class="r" style="left:757px;top:199.5px" width="8" height="8" viewBox="0 0 8 8"><path d="M4,0.5 V7.5 M1,2.2 L7,5.8 M7,2.2 L1,5.8" stroke="#ff1010" stroke-width="1.3"/></svg>
<div class="r" style="left:860px;top:197px;width:128px;height:20px;background:#f0f0f0;border:1px solid #a0a0a0;box-sizing:border-box;"></div>
<div class="t" style="left:864.6px;top:201.40px;color:#1f1f33;">100002</div>
<div class="t" style="left:728.3px;top:234.90px;color:#1f1f33;">Omzet actief boekjaar</div>
<div class="r" style="left:860px;top:231px;width:128px;height:20px;background:#f0f0f0;border:1px solid #a0a0a0;box-sizing:border-box;"></div>
<div class="t" style="right:529.5px;top:235.20px;color:#1f1f33;">3.200,00</div>
<div class="t" style="left:728.3px;top:258.90px;color:#1f1f33;">Btw actief boekjaar</div>
<div class="r" style="left:860px;top:255px;width:128px;height:20px;background:#f0f0f0;border:1px solid #a0a0a0;box-sizing:border-box;"></div>
<div class="t" style="right:529.5px;top:259.20px;color:#1f1f33;">672,00</div>
<div class="t" style="left:728.3px;top:282.90px;color:#1f1f33;">Saldo actief boekjaar</div>
<div class="r" style="left:860px;top:279px;width:128px;height:20px;background:#f0f0f0;border:1px solid #a0a0a0;box-sizing:border-box;"></div>
<div class="t" style="right:529.5px;top:283.20px;color:#1f1f33;">9.922,00</div>
<div class="t" style="left:728.3px;top:306.90px;color:#1f1f33;">Vervallen actief boekjaar</div>
<div class="r" style="left:860px;top:303px;width:128px;height:20px;background:#f0f0f0;border:1px solid #a0a0a0;box-sizing:border-box;"></div>
<div class="t" style="right:529.5px;top:307.20px;color:#1f1f33;">9.922,00</div>
<div class="t" style="left:728.3px;top:330.90px;color:#1f1f33;">Gem. betalingstermijn</div>
<div class="r" style="left:860px;top:327px;width:128px;height:20px;background:#f0f0f0;border:1px solid #a0a0a0;box-sizing:border-box;"></div>
<div class="t" style="right:529.5px;top:331.20px;color:#1f1f33;">0</div>
<div class="t" style="left:728.3px;top:354.90px;color:#1f1f33;">Max. betalingstermijn</div>
<div class="r" style="left:860px;top:351px;width:128px;height:20px;background:#f0f0f0;border:1px solid #a0a0a0;box-sizing:border-box;"></div>
<div class="t" style="right:529.5px;top:355.20px;color:#1f1f33;">0</div>
<div class="r" style="left:4px;top:415px;width:92px;height:22px;background:#dcdcdc;border:1px solid #a0a0a0;box-sizing:border-box;border-bottom:none;"></div>
<div class="t" style="left:9.8px;top:420.40px;color:#1f1f33;">Basisgegevens</div>
<div class="r" style="left:96px;top:415px;width:42px;height:22px;background:#dcdcdc;border:1px solid #a0a0a0;box-sizing:border-box;border-bottom:none;"></div>
<div class="t" style="left:102px;top:420.40px;color:#1f1f33;">CRM</div>
<div class="r" style="left:259px;top:415px;width:73px;height:22px;background:#dcdcdc;border:1px solid #a0a0a0;box-sizing:border-box;border-bottom:none;"></div>
<div class="t" style="left:263.4px;top:420.40px;color:#1f1f33;">Verzending</div>
<div class="r" style="left:332px;top:415px;width:44px;height:22px;background:#dcdcdc;border:1px solid #a0a0a0;box-sizing:border-box;border-bottom:none;"></div>
<div class="t" style="left:337px;top:420.40px;color:#1f1f33;">Uren</div>
<div class="r" style="left:376px;top:415px;width:58px;height:22px;background:#dcdcdc;border:1px solid #a0a0a0;box-sizing:border-box;border-bottom:none;"></div>
<div class="t" style="left:381.5px;top:420.40px;color:#1f1f33;">Agenda</div>
<div class="r" style="left:434px;top:415px;width:67px;height:22px;background:#dcdcdc;border:1px solid #a0a0a0;box-sizing:border-box;border-bottom:none;"></div>
<div class="t" style="left:439.5px;top:420.40px;color:#1f1f33;">Overzicht</div>
<div class="r" style="left:501px;top:415px;width:86px;height:22px;background:#dcdcdc;border:1px solid #a0a0a0;box-sizing:border-box;border-bottom:none;"></div>
<div class="t" style="left:506.7px;top:420.40px;color:#1f1f33;">Aanmaningen</div>
<div class="r" style="left:587px;top:415px;width:108px;height:22px;background:#dcdcdc;border:1px solid #a0a0a0;box-sizing:border-box;border-bottom:none;"></div>
<div class="t" style="left:592px;top:420.40px;color:#1f1f33;">Standaardboeking</div>
<div class="r" style="left:695px;top:415px;width:109px;height:22px;background:#dcdcdc;border:1px solid #a0a0a0;box-sizing:border-box;border-bottom:none;"></div>
<div class="t" style="left:700px;top:420.40px;color:#1f1f33;">Kortingen / Prijzen</div>
<div class="r" style="left:804px;top:415px;width:62px;height:22px;background:#dcdcdc;border:1px solid #a0a0a0;box-sizing:border-box;border-bottom:none;"></div>
<div class="t" style="left:809.4px;top:420.40px;color:#1f1f33;">Historiek</div>
<div class="r" style="left:866px;top:415px;width:50px;height:22px;background:#dcdcdc;border:1px solid #a0a0a0;box-sizing:border-box;border-bottom:none;"></div>
<div class="t" style="left:871.6px;top:420.40px;color:#1f1f33;">Taken</div>
<div class="r" style="left:916px;top:415px;width:87px;height:22px;background:#dcdcdc;border:1px solid #a0a0a0;box-sizing:border-box;border-bottom:none;"></div>
<div class="t" style="left:921.7px;top:420.40px;color:#1f1f33;">Interne memo</div>
<div class="r" style="left:1003px;top:415px;width:76px;height:22px;background:#dcdcdc;border:1px solid #a0a0a0;box-sizing:border-box;border-bottom:none;"></div>
<div class="t" style="left:1009.5px;top:420.40px;color:#1f1f33;">Contracten</div>
<div class="r" style="left:1079px;top:415px;width:82px;height:22px;background:#dcdcdc;border:1px solid #a0a0a0;box-sizing:border-box;border-bottom:none;"></div>
<div class="t" style="left:1084.5px;top:420.40px;color:#1f1f33;">Klantenkaart</div>
<div class="r" style="left:1161px;top:415px;width:89px;height:22px;background:#dcdcdc;border:1px solid #a0a0a0;box-sizing:border-box;border-bottom:none;"></div>
<div class="t" style="left:1166.6px;top:420.40px;color:#1f1f33;">Communicator</div>
<div class="r" style="left:2px;top:436px;width:1511px;height:2px;background:#a0a0a0;"></div>
<div class="r" style="left:2px;top:438px;width:1511px;height:1px;background:#b4b4b4;"></div>
<div class="r" style="left:137px;top:413px;width:123px;height:24px;background:#f0f0f0;border:1px solid #a0a0a0;box-sizing:border-box;border-bottom:none;"></div>
<svg class="r" style="left:144px;top:417px" width="14" height="14" viewBox="0 0 14 14"><path d="M7,1.3 L13,12.4 L1,12.4 Z" fill="#ffff00" stroke="#111" stroke-width="1.3" stroke-linejoin="round"/><path d="M7,4.8 V8.6" stroke="#111" stroke-width="1.3"/><circle cx="7" cy="10.3" r="0.75" fill="#111"/></svg>
<div class="t" style="left:159.7px;top:419.20px;color:#1f1f33;">Contactpersonen</div>
<div class="r" style="left:2px;top:439px;width:1511px;height:136px;background:#fff;"></div>
<div class="r" style="left:1px;top:436px;width:4px;height:139px;background:#a0a0a0;"></div>
<div class="r" style="left:5px;top:439px;width:1508px;height:22px;background:#f0f0f0;"></div>
<div class="r" style="left:5px;top:461px;width:1508px;height:1px;background:#a8a8a8;"></div>
<div class="r" style="left:5px;top:490px;width:1466px;height:26px;background:#cddcf4;"></div>
<div class="r" style="left:5px;top:490px;width:34px;height:27px;background:#f0f0f0;"></div>
<div class="r" style="left:40px;top:517px;width:84px;height:26px;background:#f0f0f0;"></div>
<div class="r" style="left:125px;top:517px;width:109px;height:26px;background:#f0f0f0;"></div>
<div class="r" style="left:5px;top:489px;width:1466px;height:1px;background:#c2c2c2;"></div>
<div class="r" style="left:4px;top:487px;width:1467px;height:1px;background:#e0e0e0;border:opacity:0;;box-sizing:border-box;"></div>
<div class="r" style="left:39px;top:516px;width:1432px;height:1px;background:#c8c8c8;"></div>
<div class="r" style="left:39px;top:543px;width:1432px;height:1px;background:#c8c8c8;"></div>
<div class="r" style="left:39px;top:439px;width:1px;height:22px;background:#a4a4a4;"></div>
<div class="r" style="left:39px;top:462px;width:1px;height:82px;background:#c8c8c8;"></div>
<div class="r" style="left:124px;top:439px;width:1px;height:22px;background:#a4a4a4;"></div>
<div class="r" style="left:124px;top:462px;width:1px;height:82px;background:#c8c8c8;"></div>
<div class="r" style="left:234px;top:439px;width:1px;height:22px;background:#a4a4a4;"></div>
<div class="r" style="left:234px;top:462px;width:1px;height:82px;background:#c8c8c8;"></div>
<div class="r" style="left:319px;top:439px;width:1px;height:22px;background:#a4a4a4;"></div>
<div class="r" style="left:319px;top:462px;width:1px;height:82px;background:#c8c8c8;"></div>
<div class="r" style="left:388px;top:439px;width:1px;height:22px;background:#a4a4a4;"></div>
<div class="r" style="left:388px;top:462px;width:1px;height:82px;background:#c8c8c8;"></div>
<div class="r" style="left:455px;top:439px;width:1px;height:22px;background:#a4a4a4;"></div>
<div class="r" style="left:455px;top:462px;width:1px;height:82px;background:#c8c8c8;"></div>
<div class="r" style="left:594px;top:439px;width:1px;height:22px;background:#a4a4a4;"></div>
<div class="r" style="left:594px;top:462px;width:1px;height:82px;background:#c8c8c8;"></div>
<div class="r" style="left:675px;top:439px;width:1px;height:22px;background:#a4a4a4;"></div>
<div class="r" style="left:675px;top:462px;width:1px;height:82px;background:#c8c8c8;"></div>
<div class="r" style="left:756px;top:439px;width:1px;height:22px;background:#a4a4a4;"></div>
<div class="r" style="left:756px;top:462px;width:1px;height:82px;background:#c8c8c8;"></div>
<div class="r" style="left:839px;top:439px;width:1px;height:22px;background:#a4a4a4;"></div>
<div class="r" style="left:839px;top:462px;width:1px;height:82px;background:#c8c8c8;"></div>
<div class="r" style="left:883px;top:439px;width:1px;height:22px;background:#a4a4a4;"></div>
<div class="r" style="left:883px;top:462px;width:1px;height:82px;background:#c8c8c8;"></div>
<div class="r" style="left:958px;top:439px;width:1px;height:22px;background:#a4a4a4;"></div>
<div class="r" style="left:958px;top:462px;width:1px;height:82px;background:#c8c8c8;"></div>
<div class="r" style="left:1115px;top:439px;width:1px;height:22px;background:#a4a4a4;"></div>
<div class="r" style="left:1115px;top:462px;width:1px;height:82px;background:#c8c8c8;"></div>
<div class="r" style="left:1201px;top:439px;width:1px;height:22px;background:#a4a4a4;"></div>
<div class="r" style="left:1201px;top:462px;width:1px;height:82px;background:#c8c8c8;"></div>
<div class="r" style="left:1277px;top:439px;width:1px;height:22px;background:#a4a4a4;"></div>
<div class="r" style="left:1277px;top:462px;width:1px;height:82px;background:#c8c8c8;"></div>
<div class="r" style="left:1348px;top:439px;width:1px;height:22px;background:#a4a4a4;"></div>
<div class="r" style="left:1348px;top:462px;width:1px;height:82px;background:#c8c8c8;"></div>
<div class="r" style="left:1420px;top:439px;width:1px;height:22px;background:#a4a4a4;"></div>
<div class="r" style="left:1420px;top:462px;width:1px;height:82px;background:#c8c8c8;"></div>
<div class="r" style="left:1471px;top:439px;width:1px;height:22px;background:#a4a4a4;"></div>
<div class="r" style="left:1471px;top:462px;width:1px;height:82px;background:#c8c8c8;"></div>
<div class="t" style="left:43.5px;top:444.40px;color:#6e6e6e;letter-spacing:-0.15px;">Gewijzigd door</div>
<div class="t" style="left:128.5px;top:444.40px;color:#6e6e6e;letter-spacing:-0.15px;">Gewijzigd op</div>
<div class="t" style="left:238.5px;top:444.40px;color:#6e6e6e;letter-spacing:-0.15px;">Aanspreking</div>
<div class="t" style="left:323.5px;top:444.40px;color:#6e6e6e;letter-spacing:-0.15px;">Familienaam</div>
<div class="t" style="left:392.5px;top:444.40px;color:#6e6e6e;letter-spacing:-0.15px;">Voornaam</div>
<div class="t" style="left:459.5px;top:444.40px;color:#6e6e6e;letter-spacing:-0.15px;">Functienaam</div>
<div class="t" style="left:598.5px;top:444.40px;color:#6e6e6e;letter-spacing:-0.15px;">Telefoon</div>
<div class="t" style="left:679.5px;top:444.40px;color:#6e6e6e;letter-spacing:-0.15px;">Gsm</div>
<div class="t" style="left:760.5px;top:444.40px;color:#6e6e6e;letter-spacing:-0.15px;">Straat</div>
<div class="t" style="left:843.5px;top:444.40px;color:#6e6e6e;letter-spacing:-0.15px;">Land</div>
<div class="t" style="left:887.5px;top:444.40px;color:#6e6e6e;letter-spacing:-0.15px;">Gemeente</div>
<div class="t" style="left:962.5px;top:444.40px;color:#6e6e6e;letter-spacing:-0.15px;">Email</div>
<div class="t" style="left:1119.5px;top:444.40px;color:#6e6e6e;letter-spacing:-0.15px;">Communicatie</div>
<div class="t" style="left:1205.5px;top:444.40px;color:#6e6e6e;letter-spacing:-0.15px;">Orderbeves...</div>
<div class="t" style="left:1281.5px;top:444.40px;color:#6e6e6e;letter-spacing:-0.15px;">Aanmaning...</div>
<div class="t" style="left:1352.5px;top:444.40px;color:#6e6e6e;letter-spacing:-0.15px;">Mail facturen</div>
<div class="t" style="left:1424.5px;top:444.40px;color:#6e6e6e;letter-spacing:-0.15px;">Actief</div>
<div class="t" style="left:43.5px;top:468.70px;color:#8c8c8c;">Filter gewijzig...</div>
<div class="t" style="left:128.5px;top:468.70px;color:#8c8c8c;">Filter gewijzigd op</div>
<div class="t" style="left:238.5px;top:468.70px;color:#8c8c8c;">Filter aanspre...</div>
<div class="t" style="left:323.5px;top:468.70px;color:#8c8c8c;">Filter famili...</div>
<div class="t" style="left:392.5px;top:468.70px;color:#8c8c8c;">Filter voor...</div>
<div class="t" style="left:459.5px;top:468.70px;color:#8c8c8c;">Filter functienaam</div>
<div class="t" style="left:598.5px;top:468.70px;color:#8c8c8c;">Filter telefoon</div>
<div class="t" style="left:679.5px;top:468.70px;color:#8c8c8c;">Filter gsm</div>
<div class="t" style="left:760.5px;top:468.70px;color:#8c8c8c;">Filter straat</div>
<div class="t" style="left:843.5px;top:468.70px;color:#8c8c8c;">Filter ...</div>
<div class="t" style="left:887.5px;top:468.70px;color:#8c8c8c;">Filter geme...</div>
<div class="t" style="left:962.5px;top:468.70px;color:#8c8c8c;">Filter email</div>
<svg class="r" style="left:822px;top:446px" width="11" height="7" viewBox="0 0 11 7"><path d="M1,6 L5.5,1 L10,6 Z" fill="#666"/></svg>
<svg class="r" style="left:10px;top:470px" width="11" height="10" viewBox="0 0 11 10"><path d="M1,1 H10 L6.5,5 V9 L4.5,7.5 V5 Z" fill="#555"/></svg>
<svg class="r" style="left:7px;top:497px" width="12" height="12" viewBox="0 0 12 12"><path d="M2,2 L10,10 M10,2 L2,10" stroke="#e01818" stroke-width="3"/></svg>
<svg class="r" style="left:27px;top:499px" width="6" height="10" viewBox="0 0 6 10"><path d="M1,0.5 L4.3,4.5 L1,8.5 Z" fill="#808080"/></svg>
<svg class="r" style="left:47px;top:498px" width="9" height="9" viewBox="0 0 9 9"><rect x="0.5" y="0.5" width="8" height="8" fill="none" stroke="#606060"/><path d="M2,4.5 H7 M4.5,2 V7" stroke="#505050"/></svg>
<div class="t" style="left:66px;top:497.40px;color:#1f1f33;">ELLEN</div>
<div class="t" style="left:128.7px;top:497.40px;color:#1f1f33;">22/06/2022 12:48</div>
<div class="t" style="left:323.6px;top:497.40px;color:#1f1f33;">Vankeerbe...</div>
<div class="t" style="left:392.5px;top:497.40px;color:#1f1f33;">Ellen</div>
<div class="t" style="left:459.5px;top:497.40px;color:#1f1f33;">Bestuurder - Zaakvoerder</div>
<div class="t" style="left:843.5px;top:497.40px;color:#1f1f33;">België</div>
<div class="t" style="left:887.5px;top:497.40px;color:#1f1f33;">Herselt</div>
<div class="t" style="left:962.5px;top:497.40px;color:#1f1f33;text-decoration:underline;letter-spacing:-0.13px;">ellen@wolterskluwer.com</div>
<svg class="r" style="left:10px;top:524px" width="12" height="12" viewBox="0 0 12 12"><g stroke="#f0a050" stroke-width="1.1"><path d="M6,1 V11 M1,6 H11 M2.5,2.5 L9.5,9.5 M9.5,2.5 L2.5,9.5"/></g><circle cx="6" cy="6" r="2.8" fill="#f09a40"/></svg>
<svg class="r" style="left:1152px;top:468px" width="14" height="14" viewBox="0 0 14 14"><rect x="0.5" y="0.5" width="13" height="13" fill="#fff" stroke="#8a8a8a"/><rect x="4" y="4" width="6" height="6" fill="#666"/></svg>
<svg class="r" style="left:1152px;top:496px" width="14" height="14" viewBox="0 0 14 14"><rect x="0.5" y="0.5" width="13" height="13" fill="#fff" stroke="#8a8a8a"/></svg>
<svg class="r" style="left:1152px;top:523px" width="14" height="14" viewBox="0 0 14 14"><rect x="0.5" y="0.5" width="13" height="13" fill="#fff" stroke="#8a8a8a"/><rect x="4" y="4" width="6" height="6" fill="#666"/></svg>
<svg class="r" style="left:1233px;top:468px" width="14" height="14" viewBox="0 0 14 14"><rect x="0.5" y="0.5" width="13" height="13" fill="#fff" stroke="#8a8a8a"/><rect x="4" y="4" width="6" height="6" fill="#666"/></svg>
<svg class="r" style="left:1233px;top:496px" width="14" height="14" viewBox="0 0 14 14"><rect x="0.5" y="0.5" width="13" height="13" fill="#fff" stroke="#8a8a8a"/></svg>
<svg class="r" style="left:1233px;top:523px" width="14" height="14" viewBox="0 0 14 14"><rect x="0.5" y="0.5" width="13" height="13" fill="#fff" stroke="#8a8a8a"/><rect x="4" y="4" width="6" height="6" fill="#666"/></svg>
<svg class="r" style="left:1306px;top:468px" width="14" height="14" viewBox="0 0 14 14"><rect x="0.5" y="0.5" width="13" height="13" fill="#fff" stroke="#8a8a8a"/><rect x="4" y="4" width="6" height="6" fill="#666"/></svg>
<svg class="r" style="left:1306px;top:496px" width="14" height="14" viewBox="0 0 14 14"><rect x="0.5" y="0.5" width="13" height="13" fill="#fff" stroke="#8a8a8a"/><path d="M3.5,7 L6,9.5 L10.5,4.5" stroke="#555" stroke-width="1.1" fill="none"/></svg>
<svg class="r" style="left:1306px;top:523px" width="14" height="14" viewBox="0 0 14 14"><rect x="0.5" y="0.5" width="13" height="13" fill="#fff" stroke="#8a8a8a"/><rect x="4" y="4" width="6" height="6" fill="#666"/></svg>
<svg class="r" style="left:1378px;top:468px" width="14" height="14" viewBox="0 0 14 14"><rect x="0.5" y="0.5" width="13" height="13" fill="#fff" stroke="#8a8a8a"/><rect x="4" y="4" width="6" height="6" fill="#666"/></svg>
<svg class="r" style="left:1378px;top:496px" width="14" height="14" viewBox="0 0 14 14"><rect x="0.5" y="0.5" width="13" height="13" fill="#fff" stroke="#8a8a8a"/></svg>
<svg class="r" style="left:1378px;top:523px" width="14" height="14" viewBox="0 0 14 14"><rect x="0.5" y="0.5" width="13" height="13" fill="#fff" stroke="#8a8a8a"/><rect x="4" y="4" width="6" height="6" fill="#666"/></svg>
<svg class="r" style="left:1439px;top:468px" width="14" height="14" viewBox="0 0 14 14"><rect x="0.5" y="0.5" width="13" height="13" fill="#fff" stroke="#8a8a8a"/><rect x="4" y="4" width="6" height="6" fill="#666"/></svg>
<svg class="r" style="left:1439px;top:496px" width="14" height="14" viewBox="0 0 14 14"><rect x="0.5" y="0.5" width="13" height="13" fill="#fff" stroke="#8a8a8a"/><path d="M3.5,7 L6,9.5 L10.5,4.5" stroke="#555" stroke-width="1.1" fill="none"/></svg>
<svg class="r" style="left:1439px;top:523px" width="14" height="14" viewBox="0 0 14 14"><rect x="0.5" y="0.5" width="13" height="13" fill="#fff" stroke="#8a8a8a"/><rect x="4" y="4" width="6" height="6" fill="#666"/></svg>
</body></html>
